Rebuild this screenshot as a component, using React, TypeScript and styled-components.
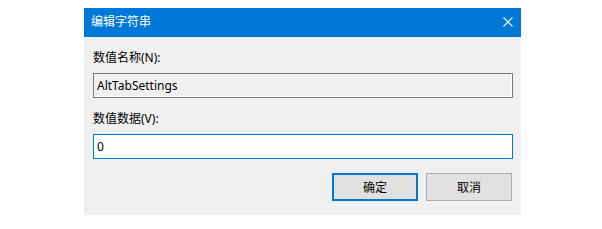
import styled, { createGlobalStyle } from "styled-components";

const GlobalStyle = createGlobalStyle`
  html, body {
    margin: 0;
    padding: 0;
    background: #ffffff;
  }
  body {
    font-family: "Noto Sans", "Noto Sans CJK SC", sans-serif;
    font-size: 12px;
  }
`;

const CloseIcon = () => (
  <svg width="10" height="10" viewBox="0 0 10 10">
    <path d="M0.5 0.5 L9.5 9.5 M9.5 0.5 L0.5 9.5" stroke="#ffffff" strokeWidth="1.1" fill="none" />
  </svg>
);

export default function App() {
  return (
    <Page>
      <GlobalStyle />
      <Dialog>
        <TitleBar>
          <Title>编辑字符串</Title>
          <CloseButton>
            <CloseIcon />
          </CloseButton>
        </TitleBar>
        <Body>
          <Label>数值名称(N):</Label>
          <TextBox readOnly>AltTabSettings</TextBox>
          <Label spaced>数值数据(V):</Label>
          <TextBox>0</TextBox>
          <ButtonRow>
            <Button primary>确定</Button>
            <Button>取消</Button>
          </ButtonRow>
        </Body>
      </Dialog>
    </Page>
  );
}

const Page = styled.div`
  padding: 8px 0 0 84px;
`;

const Dialog = styled.div`
  width: 437px;
  height: 207px;
  background: #f0f0f0;
  display: flex;
  flex-direction: column;
`;

const TitleBar = styled.div`
  height: 29px;
  background: #0078d7;
  display: flex;
  align-items: center;
  justify-content: space-between;
  padding: 0 8px 0 7px;
`;

const Title = styled.span`
  color: #ffffff;
  font-size: 12px;
  line-height: 16px;
  margin-top: -1px;
`;

const CloseButton = styled.div`
  display: flex;
  align-items: center;
  height: 10px;
  margin-top: -1px;
`;

const Body = styled.div`
  display: flex;
  flex-direction: column;
  padding: 13px 8px 0 9px;
`;

const Label = styled.div<{ spaced?: boolean }>`
  height: 16px;
  line-height: 16px;
  color: #000000;
  margin-top: ${(p) => (p.spaced ? "13px" : "0")};
  margin-bottom: 7px;
`;

const TextBox = styled.div<{ readOnly?: boolean }>`
  box-sizing: border-box;
  height: 25px;
  line-height: 23px;
  padding: 0 3px;
  color: #000000;
  border: 1px solid ${(p) => (p.readOnly ? "#7a7a7a" : "#0078d7")};
  background: ${(p) => (p.readOnly ? "#f0f0f0" : "#ffffff")};
  box-shadow: ${(p) => (p.readOnly ? "inset -1px -1px 0 #ffffff" : "none")};
`;

const ButtonRow = styled.div`
  display: flex;
  justify-content: flex-end;
  gap: 8px;
  margin-top: 14px;
  padding-right: 1px;
`;

const Button = styled.div<{ primary?: boolean }>`
  box-sizing: border-box;
  width: 86px;
  height: 28px;
  display: flex;
  align-items: center;
  justify-content: center;
  background: #e1e1e1;
  color: #000000;
  border: ${(p) => (p.primary ? "2px solid #0078d7" : "1px solid #adadad")};
`;
